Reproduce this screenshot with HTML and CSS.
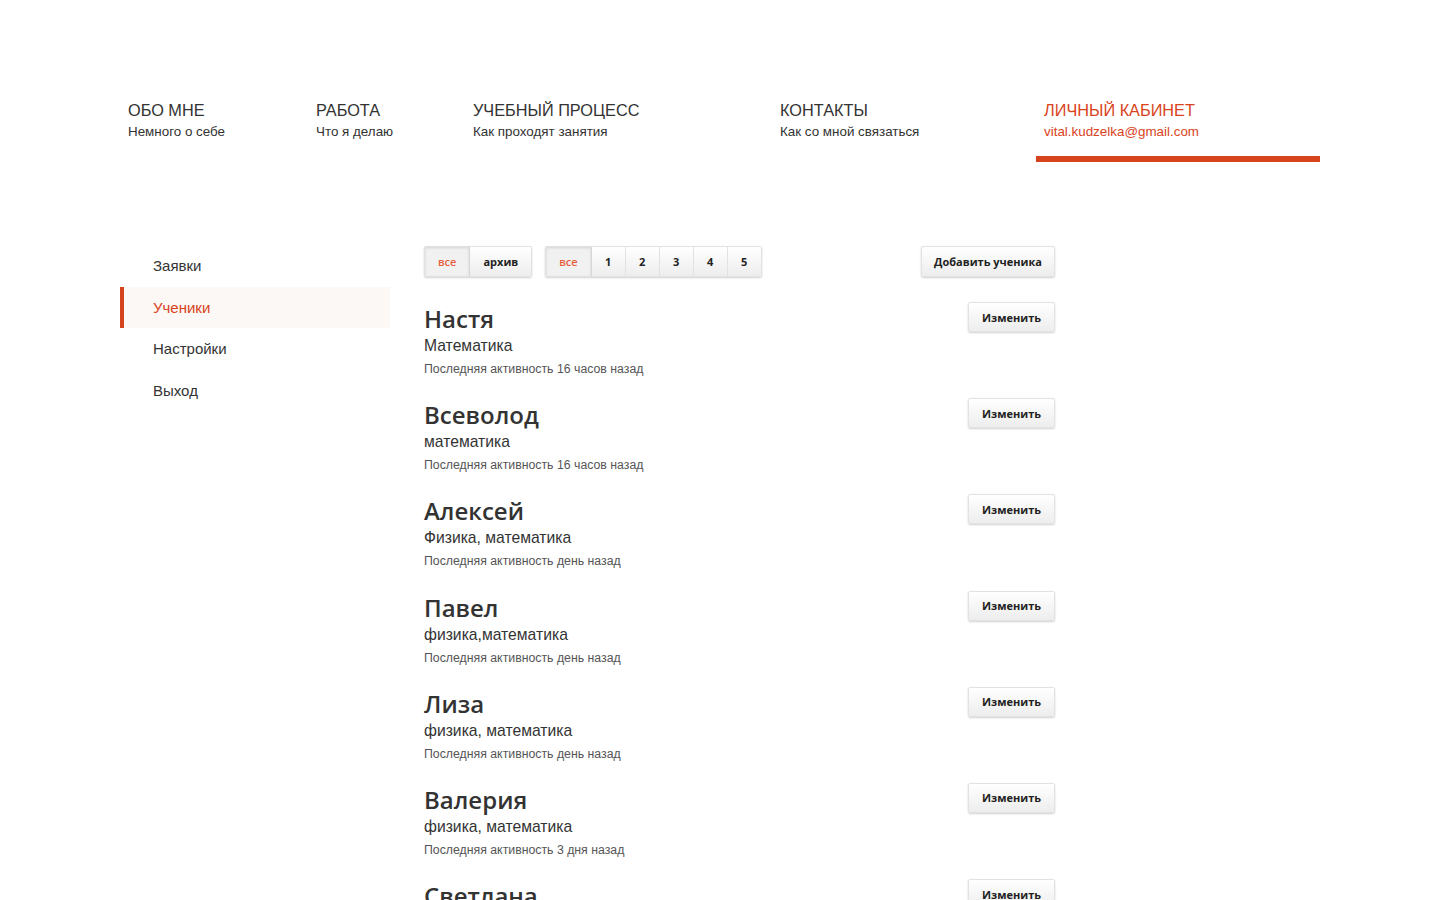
FILE: index.html
```html
<!DOCTYPE html>
<html lang="ru">
<head>
<meta charset="utf-8">
<title>Ученики</title>
<link rel="stylesheet" href="styles.css">
</head>
<body>
<div class="page">
  <header class="nav">
    <a class="nav-item nav-about" href="#"><span class="nav-title">ОБО МНЕ</span><span class="nav-sub">Немного о себе</span></a>
    <a class="nav-item nav-work" href="#"><span class="nav-title">РАБОТА</span><span class="nav-sub">Что я делаю</span></a>
    <a class="nav-item nav-study" href="#"><span class="nav-title">УЧЕБНЫЙ ПРОЦЕСС</span><span class="nav-sub">Как проходят занятия</span></a>
    <a class="nav-item nav-contacts" href="#"><span class="nav-title">КОНТАКТЫ</span><span class="nav-sub">Как со мной связаться</span></a>
    <a class="nav-item nav-cabinet is-active" href="#"><span class="nav-title">ЛИЧНЫЙ КАБИНЕТ</span><span class="nav-sub">vital.kudzelka@gmail.com</span></a>
  </header>

  <div class="main">
    <aside class="sidebar">
      <a class="side-link" href="#">Заявки</a>
      <a class="side-link is-active" href="#">Ученики</a>
      <a class="side-link" href="#">Настройки</a>
      <a class="side-link" href="#">Выход</a>
    </aside>

    <section class="content">
      <div class="toolbar">
        <div class="btn-group">
          <button class="btn btn-seg is-active">все</button>
          <button class="btn btn-seg">архив</button>
        </div>
        <div class="btn-group">
          <button class="btn btn-seg is-active">все</button>
          <button class="btn btn-seg btn-num">1</button>
          <button class="btn btn-seg btn-num">2</button>
          <button class="btn btn-seg btn-num">3</button>
          <button class="btn btn-seg btn-num">4</button>
          <button class="btn btn-seg btn-num">5</button>
        </div>
        <button class="btn btn-add">Добавить ученика</button>
      </div>

      <ul class="students">
        <li class="student">
          <div class="student-info">
            <div class="student-name">Настя</div>
            <div class="student-subject">Математика</div>
            <div class="student-activity">Последняя активность 16 часов назад</div>
          </div>
          <button class="btn btn-edit">Изменить</button>
        </li>
        <li class="student">
          <div class="student-info">
            <div class="student-name">Всеволод</div>
            <div class="student-subject">математика</div>
            <div class="student-activity">Последняя активность 16 часов назад</div>
          </div>
          <button class="btn btn-edit">Изменить</button>
        </li>
        <li class="student">
          <div class="student-info">
            <div class="student-name">Алексей</div>
            <div class="student-subject">Физика, математика</div>
            <div class="student-activity">Последняя активность день назад</div>
          </div>
          <button class="btn btn-edit">Изменить</button>
        </li>
        <li class="student">
          <div class="student-info">
            <div class="student-name">Павел</div>
            <div class="student-subject">физика,математика</div>
            <div class="student-activity">Последняя активность день назад</div>
          </div>
          <button class="btn btn-edit">Изменить</button>
        </li>
        <li class="student">
          <div class="student-info">
            <div class="student-name">Лиза</div>
            <div class="student-subject">физика, математика</div>
            <div class="student-activity">Последняя активность день назад</div>
          </div>
          <button class="btn btn-edit">Изменить</button>
        </li>
        <li class="student">
          <div class="student-info">
            <div class="student-name">Валерия</div>
            <div class="student-subject">физика, математика</div>
            <div class="student-activity">Последняя активность 3 дня назад</div>
          </div>
          <button class="btn btn-edit">Изменить</button>
        </li>
        <li class="student">
          <div class="student-info">
            <div class="student-name">Светлана</div>
            <div class="student-subject">физика, математика</div>
            <div class="student-activity">Последняя активность 3 дня назад</div>
          </div>
          <button class="btn btn-edit">Изменить</button>
        </li>
      </ul>
    </section>
  </div>
</div>
</body>
</html>
```

FILE: styles.css
```css
* { box-sizing: border-box; }

html, body {
  margin: 0;
  padding: 0;
  background: #ffffff;
}

body {
  font-family: "Liberation Sans", Arial, sans-serif;
  color: #333333;
  overflow: hidden;
}

a { text-decoration: none; color: inherit; }

.page {
  width: 1200px;
  margin: 0 auto;
}

/* ---------- top navigation ---------- */
.nav {
  display: grid;
  grid-template-columns: 188px 157px 307px 264px 284px;
  padding-top: 100px;
}

.nav-item {
  display: flex;
  flex-direction: column;
  padding: 0 8px 14px;
  border-bottom: 6px solid transparent;
  color: #333333;
}

.nav-title {
  font-size: 16.3px;
  line-height: 20px;
}

.nav-sub {
  font-size: 13.4px;
  line-height: 21px;
  padding-top: 1px;
}

.nav-item.is-active {
  color: #d9431c;
  border-bottom-color: #d5441c;
}

/* ---------- main layout ---------- */
.main {
  display: flex;
  gap: 34px;
  margin-top: 83px;
}

.sidebar {
  width: 270px;
  flex: none;
  display: flex;
  flex-direction: column;
}

.side-link {
  display: block;
  height: 41.5px;
  line-height: 41px;
  padding-left: 29px;
  font-size: 15px;
  color: #333333;
  border-left: 4px solid transparent;
}

.side-link.is-active {
  background: #fcf8f5;
  border-left-color: #d5441c;
  color: #d9431c;
}

.content {
  width: 631px;
  flex: none;
}

/* ---------- buttons ---------- */
.btn {
  font-family: "Open Sans", "Liberation Sans", sans-serif;
  font-weight: 700;
  font-size: 11px;
  color: #222222;
  background: linear-gradient(#ffffff, #ededed);
  border: 1px solid #e2e2e2;
  border-radius: 2px;
  box-shadow: 0 1px 2px rgba(0, 0, 0, 0.18);
  height: 31px;
  padding: 0 14px;
  cursor: pointer;
  margin: 0;
  white-space: nowrap;
}

.toolbar {
  display: flex;
  align-items: center;
  gap: 13px;
  padding-top: 1px;
}

.btn-group {
  display: flex;
  border-radius: 2px;
  box-shadow: 0 1px 2px rgba(0, 0, 0, 0.18);
}

.btn-seg {
  box-shadow: none;
  border-radius: 0;
  border-left-width: 0;
  padding: 0 13px;
}

.btn-seg:first-child {
  border-left-width: 1px;
  border-radius: 2px 0 0 2px;
}

.btn-seg:last-child {
  border-radius: 0 2px 2px 0;
}

.btn-seg.is-active {
  background: #f1f1f1;
  color: #e6603f;
  font-weight: 600;
  box-shadow: inset 0 1px 3px rgba(0, 0, 0, 0.12);
  border-right: 1px solid #d6d6d6;
}

.btn-num {
  width: 34px;
  padding: 0;
}

.btn-add {
  margin-left: auto;
  padding: 0;
  width: 134px;
}

/* ---------- students ---------- */
.students {
  list-style: none;
  margin: 26px 0 0;
  padding: 0;
}

.student {
  display: flex;
  justify-content: space-between;
  align-items: flex-start;
  height: 96.2px;
}

.student-name {
  font-family: "Open Sans", "Liberation Sans", sans-serif;
  font-weight: 600;
  font-size: 24px;
  line-height: 32px;
  color: #333333;
}

.student-subject {
  margin-top: 1px;
  font-size: 15.7px;
  line-height: 20px;
  color: #333333;
}

.student-activity {
  margin-top: 3px;
  font-size: 12.3px;
  line-height: 20px;
  color: #555555;
}

.btn-edit {
  width: 87px;
  height: 30px;
  padding: 0;
  margin-top: -1px;
}
```
